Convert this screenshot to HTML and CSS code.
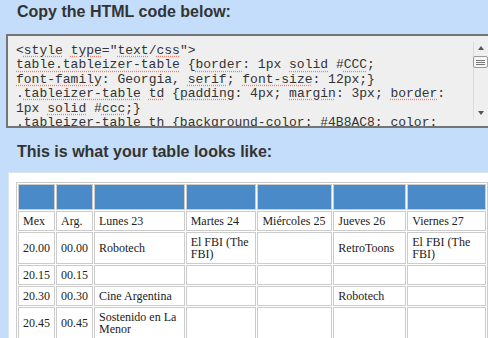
FILE: index.html
```html
<!DOCTYPE html>
<html lang="en">
<head>
<meta charset="UTF-8">
<title>Tableizer</title>
<link rel="stylesheet" href="styles.css">
</head>
<body>

<h2 class="title first">Copy the HTML code below:</h2>

<div class="code">
    <div class="ln">&lt;<span class="sp">style</span> <span class="sp">type</span>="<span class="sp">text</span>/<span class="sp">css</span>"&gt;</div>
    <div class="ln"><span class="sp">table.tableizer-table</span> {<span class="sp">border</span>: 1px <span class="sp">solid</span> #<span class="sp">CCC</span>;</div>
    <div class="ln"><span class="sp">font-family</span>: Georgia, <span class="sp">serif</span>; <span class="sp">font-size</span>: 12px;}</div>
    <div class="ln">.<span class="sp">tableizer-table</span> <span class="sp">td</span> {<span class="sp">padding</span>: 4px; <span class="sp">margin</span>: 3px; <span class="sp">border</span>:</div>
    <div class="ln">1px <span class="sp">solid</span> #<span class="sp">ccc</span>;}</div>
    <div class="ln">.tableizer-table th {background-color: #4B8AC8; color:</div>
    <div class="scroll">
        <div class="arrow up"></div>
        <div class="thumb"><span></span><span></span><span></span></div>
        <div class="arrow down"></div>
    </div>
</div>

<h2 class="title second">This is what your table looks like:</h2>

<div class="panel">
    <table class="tableizer-table">
        <tr>
            <th class="c1"></th><th class="c2"></th><th class="c3"></th><th class="c4"></th><th class="c5"></th><th class="c6"></th><th class="c7"></th>
        </tr>
        <tr>
            <td>Mex</td><td>Arg.</td><td>Lunes 23</td><td>Martes 24</td><td>Miércoles 25</td><td>Jueves 26</td><td>Viernes 27</td>
        </tr>
        <tr>
            <td>20.00</td><td>00.00</td><td>Robotech</td><td>El FBI (The FBI)</td><td></td><td>RetroToons</td><td>El FBI (The FBI)</td>
        </tr>
        <tr>
            <td>20.15</td><td>00.15</td><td></td><td></td><td></td><td></td><td></td>
        </tr>
        <tr>
            <td>20.30</td><td>00.30</td><td>Cine Argentina</td><td></td><td></td><td>Robotech</td><td></td>
        </tr>
        <tr>
            <td>20.45</td><td>00.45</td><td>Sostenido en La Menor</td><td></td><td></td><td></td><td></td>
        </tr>
    </table>
</div>

</body>
</html>
```

FILE: styles.css
```css
body {
    margin: 0;
    background: #c3ddfa;
    overflow: hidden;
    width: 488px;
    height: 338px;
}
.title {
    margin: 0;
    padding-left: 17px;
    font-family: "Liberation Sans", Arial, sans-serif;
    font-size: 16px;
    font-weight: bold;
    line-height: 18px;
    color: #333;
}
.first {
    padding-top: 3px;
}
.second {
    margin-top: 15px;
}
.code {
    position: relative;
    margin: 13px 0 0 6px;
    width: 474px;
    height: 82px;
    padding: 8px 0 0 8px;
    border: 2px solid #757575;
    border-right: none;
    background: #efefef;
    overflow: hidden;
    font-family: "Liberation Mono", "Courier New", monospace;
    font-size: 13px;
    line-height: 14.4px;
    color: #333;
}
.ln {
    white-space: pre;
}
.sp {
    text-decoration: underline dotted #e8806a;
    text-underline-offset: 2px;
}
.scroll {
    position: absolute;
    left: 465px;
    top: 6px;
    width: 11px;
    height: 78px;
    border-left: 1px solid #dcdcdc;
}
.arrow {
    position: absolute;
    left: 4px;
    width: 0;
    height: 0;
    border-left: 3px solid transparent;
    border-right: 3px solid transparent;
}
.up {
    top: 4px;
    border-bottom: 4px solid #555;
}
.down {
    bottom: 5px;
    border-top: 4px solid #555;
}
.thumb {
    position: absolute;
    left: -1px;
    top: 14px;
    width: 9px;
    height: 10px;
    border: 1px solid #9a9a9a;
    border-radius: 2px;
    background: #f6f6f6;
    display: flex;
    flex-direction: column;
    justify-content: center;
    gap: 1px;
    padding: 0 2px;
    box-sizing: content-box;
}
.thumb span {
    height: 1px;
    background: #777;
}
.panel {
    margin: 11px 0 0 8px;
    padding: 9px 0 0 7px;
    height: 156px;
    overflow: hidden;
    background: #fff;
    border: 1px solid #dce6f2;
    border-right: none;
}
.tableizer-table {
    border: 1px solid #ccc;
    border-spacing: 1px;
    table-layout: fixed;
    font-family: "Liberation Serif", Georgia, serif;
    font-size: 12px;
    line-height: 12px;
    color: #222;
}
.tableizer-table th {
    background: #4b8ac8;
    border: 1px solid #ccc;
    height: 18px;
    padding: 3px 4px;
}
.tableizer-table td {
    border: 1px solid #ccc;
    padding: 3px 4px;
    height: 12px;
    vertical-align: middle;
}
.c1 { width: 27px; }
.c2 { width: 27px; }
.c3 { width: 81px; }
.c4 { width: 61px; }
.c5 { width: 65px; }
.c6 { width: 63px; }
.c7 { width: 69px; }
```
